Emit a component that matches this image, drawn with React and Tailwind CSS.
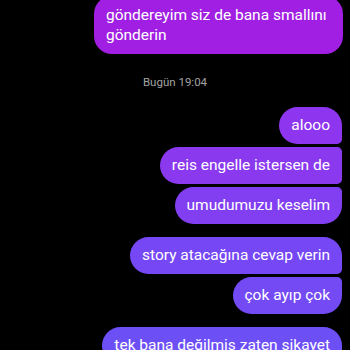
import React from "react";

const Bubble = ({ text, className }) => (
  <div className={`px-3 py-[8px] text-[15.5px] leading-[21px] text-white ${className}`}>{text}</div>
);

export default function App() {
  return (
    <div className="w-[350px] h-[350px] overflow-hidden bg-black font-['Roboto',sans-serif]">
      <div className="flex flex-col items-end pr-[8px] -mt-[4px]">
        <div className="ml-[94px] w-[249px] -mr-[1px] pl-3 pr-2 py-[9px] text-[15.5px] leading-[20px] text-white bg-[#a11fe2] rounded-[18px]">
          göndereyim siz de bana smallını gönderin
        </div>
        <div className="self-center ml-[8px] mt-[20px] text-[11.5px] leading-[16px] text-[#a3a3a3]">Bugün 19:04</div>
        <div className="mt-[17px] flex flex-col items-end gap-[3px]">
          <Bubble text="alooo" className="bg-[#8e36ef] rounded-l-[19px] rounded-tr-[19px] rounded-br-[5px]" />
          <Bubble text="reis engelle istersen de" className="bg-[#8a39ef] rounded-l-[19px] rounded-r-[5px]" />
          <Bubble text="umudumuzu keselim" className="bg-[#823ff1] rounded-l-[19px] rounded-tr-[5px] rounded-br-[19px]" />
        </div>
        <div className="mt-[13px] flex flex-col items-end gap-[3px]">
          <Bubble text="story atacağına cevap verin" className="bg-[#7647f4] rounded-l-[19px] rounded-tr-[19px] rounded-br-[5px]" />
          <Bubble text="çok ayıp çok" className="bg-[#734af4] rounded-l-[19px] rounded-tr-[5px] rounded-br-[19px]" />
        </div>
        <div className="mt-[13px] flex flex-col items-end gap-[3px]">
          <Bubble text="tek bana değilmiş zaten şikayet" className="bg-[#6d4ff6] rounded-l-[19px] rounded-tr-[19px] rounded-br-[5px]" />
        </div>
      </div>
    </div>
  );
}
